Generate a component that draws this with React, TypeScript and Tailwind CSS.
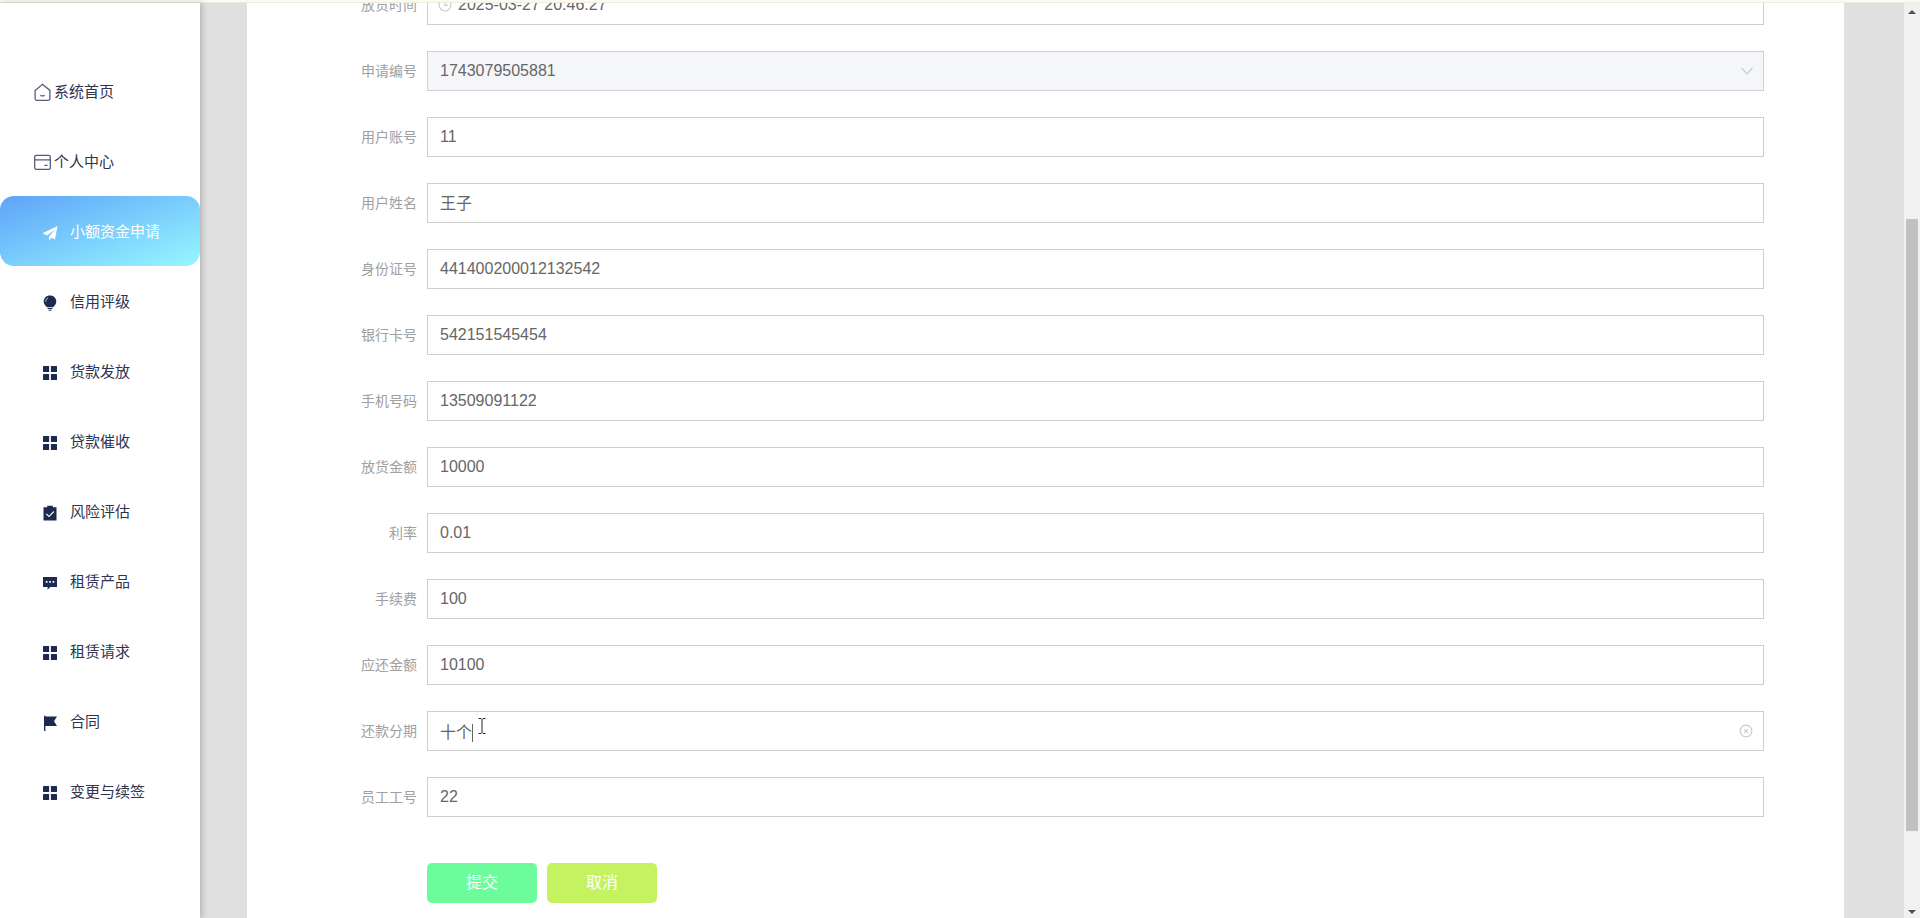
const menu = [
  { name: "小额资金申请", icon: "plane", active: true },
  { name: "信用评级", icon: "bulb" },
  { name: "货款发放", icon: "grid" },
  { name: "贷款催收", icon: "grid" },
  { name: "风险评估", icon: "claim" },
  { name: "租赁产品", icon: "comment" },
  { name: "租赁请求", icon: "grid" },
  { name: "合同", icon: "flag" },
  { name: "变更与续签", icon: "grid" },
]

const fields = [
  { label: "用户账号", value: "11" },
  { label: "用户姓名", value: "王子", cjk: true },
  { label: "身份证号", value: "441400200012132542" },
  { label: "银行卡号", value: "542151545454" },
  { label: "手机号码", value: "13509091122" },
  { label: "放货金额", value: "10000" },
  { label: "利率", value: "0.01" },
  { label: "手续费", value: "100" },
  { label: "应还金额", value: "10100" },
]

function MenuIcon({ name }: { name: string }) {
  const paths: Record<string, React.ReactNode> = {
    plane: <path d="M15.5 1 L0.5 8.3 L5 10.6 L13 4.5 L7 11.4 L7 15.5 L9.6 12.8 L13 14.5 Z" />,
    bulb: (
      <>
        <path d="M8 0.5 C4.2 0.5 1.7 3.2 1.7 6.4 C1.7 8.9 3.4 10.6 5 12.2 L11 12.2 C12.6 10.6 14.3 8.9 14.3 6.4 C14.3 3.2 11.8 0.5 8 0.5 Z" />
        <path d="M5.6 13 H10.4 V14 H5.6 Z M6.6 14.7 H9.4 V15.7 H6.6 Z" />
        <path d="M3.8 6.6 C3.8 4.8 4.8 3.4 6.2 2.8" className="fill-none stroke-white stroke-[0.8]" />
      </>
    ),
    grid: (
      <>
        <rect x="1" y="1" width="6.1" height="6.1" rx="0.5" />
        <rect x="8.9" y="1" width="6.1" height="6.1" rx="0.5" />
        <rect x="1" y="8.9" width="6.1" height="6.1" rx="0.5" />
        <rect x="8.9" y="8.9" width="6.1" height="6.1" rx="0.5" />
      </>
    ),
    claim: (
      <path
        fillRule="evenodd"
        d="M1.5 2.2 H5.2 V0.8 H10.8 V2.2 H14.5 V15.5 H1.5 Z M4.6 8.4 L3.8 9.2 L7 12.3 L12.2 6.9 L11.4 6.1 L7 10.7 Z"
      />
    ),
    comment: (
      <path
        fillRule="evenodd"
        d="M1 2 H15 V12 H8.2 L5.6 14.8 V12 H1 Z M3.8 6 V7.7 H5.5 V6 Z M7.2 6 V7.7 H8.9 V6 Z M10.6 6 V7.7 H12.3 V6 Z"
      />
    ),
    flag: <path d="M2 0.8 H3.4 V1.5 H15 L12 6.2 L15 11 H3.4 V16 H2 Z" />,
  }
  return (
    <svg viewBox="0 0 16 16" className="h-4 w-4 shrink-0 fill-current">
      {paths[name]}
    </svg>
  )
}

function FormRow({ label, disabled, children }: { label: string; disabled?: boolean; children: React.ReactNode }) {
  return (
    <div className="mb-[26px] flex h-10 items-center">
      <label className="w-[170px] shrink-0 pr-[10px] text-right text-[14px] text-[#a0a0a0]">{label}</label>
      <div
        className={
          disabled
            ? "relative flex h-10 flex-1 items-center border border-[#cfcfcf] bg-[#f5f6fa] px-3 text-[16px] text-[#666666]"
            : "relative flex h-10 flex-1 items-center border border-[#cfcfcf] bg-white px-3 text-[16px] text-[#666666]"
        }
      >
        {children}
      </div>
    </div>
  )
}

export default function App() {
  return (
    <div className="flex h-[918px] flex-col overflow-hidden bg-white font-['Liberation_Sans','Noto_Sans_CJK_SC',sans-serif]">
      {/* 顶部细线 */}
      <div className="h-[3px] shrink-0 border-b border-[#ecece0] bg-[#fbfbf3]" />

      <div className="flex min-h-0 flex-1">
        {/* 左侧菜单 */}
        <aside className="z-10 w-[200px] shrink-0 bg-white pt-[53px] shadow-[2px_0_6px_rgba(0,0,0,0.22)]">
          <div className="flex h-[70px] items-center pl-[33px] pt-[3px] text-[15px] text-[#2f3350]">
            <svg viewBox="0 0 18 18" className="mr-[2px] h-[19px] w-[19px] fill-none stroke-[#55587a] stroke-[1.2]">
              <path d="M2 7 L9 1.2 L16 7 V15 Q16 16.4 14.6 16.4 H3.4 Q2 16.4 2 15 Z" />
              <path d="M7 11.5 Q9 13 11 11.5" />
            </svg>
            系统首页
          </div>
          <div className="flex h-[70px] items-center pl-[33px] pt-[3px] text-[15px] text-[#2f3350]">
            <svg viewBox="0 0 18 18" className="mr-[2px] h-[19px] w-[19px] fill-none stroke-[#55587a] stroke-[1.2]">
              <rect x="1.6" y="2.2" width="14.8" height="13.4" rx="1.6" />
              <path d="M1.8 6.6 H16.2 M10.8 11.8 H13.8" />
            </svg>
            个人中心
          </div>
          {menu.map((item) => (
            <div
              key={item.name}
              className={
                item.active
                  ? "flex h-[70px] items-center gap-[12px] rounded-[14px] bg-gradient-to-br from-[#5fa3f7] to-[#97f7ff] pl-[42px] pt-[3px] text-[15px] text-white"
                  : "flex h-[70px] items-center gap-[12px] pl-[42px] pt-[3px] text-[15px] text-[#2f3350]"
              }
            >
              <span className={item.active ? "text-white" : "text-[#1b2a4e]"}>
                <MenuIcon name={item.icon} />
              </span>
              {item.name}
            </div>
          ))}
        </aside>

        {/* 内容区 */}
        <main className="min-w-0 flex-1 bg-[#e0e0e0] pl-[47px] pr-[60px]">
          <div className="h-full overflow-hidden bg-white pl-[10px] pr-[80px]">
            <div className="-mt-[18px]">
              <FormRow label="放货时间">
                <svg viewBox="0 0 16 16" className="-ml-[2px] mr-[6px] h-[14px] w-[14px] fill-none stroke-[#c0c4cc] stroke-[1.2]">
                  <circle cx="8" cy="8" r="6.8" />
                  <path d="M8 4 V8.4 H11" />
                </svg>
                2025-03-27 20:46:27
              </FormRow>
              <FormRow label="申请编号" disabled>
                <span>1743079505881</span>
                <svg viewBox="0 0 12 8" className="absolute right-[10px] h-2 w-3 fill-none stroke-[#c8ccd4] stroke-[1.2]">
                  <path d="M0.6 1 L6 6.8 L11.4 1" />
                </svg>
              </FormRow>
              {fields.map((f) => (
                <FormRow key={f.label} label={f.label}>
                  <span className={f.cjk ? "pt-[2px]" : ""}>{f.value}</span>
                </FormRow>
              ))}
              <FormRow label="还款分期">
                <span className="pt-[3px]">十个</span>
                <span className="mt-[3px] h-[18px] w-px bg-[#666666]" />
                <svg viewBox="0 0 14 14" className="absolute right-[10px] h-[14px] w-[14px] fill-none stroke-[#c8ccd4]">
                  <circle cx="7" cy="7" r="5.8" strokeWidth="1.3" />
                  <path d="M5.2 5.2 L8.8 8.8 M8.8 5.2 L5.2 8.8" strokeWidth="1.1" />
                </svg>
                {/* 鼠标光标 */}
                <svg viewBox="0 0 8 16" className="absolute left-[50px] top-[6px] h-4 w-2 fill-none stroke-[#222222]">
                  <path d="M0.5 0.5 H3 L4 1.5 L5 0.5 H7.5 M4 1.5 V14.5 M0.5 15.5 H3 L4 14.5 L5 15.5 H7.5" strokeWidth="1" />
                </svg>
              </FormRow>
              <FormRow label="员工工号">22</FormRow>
              <div className="mt-[46px] flex gap-[10px] pl-[170px]">
                <button className="h-10 w-[110px] rounded-[5px] bg-[#6cfc9c] text-[16px] text-white">提交</button>
                <button className="h-10 w-[110px] rounded-[5px] bg-[#c5f261] text-[16px] text-white">取消</button>
              </div>
            </div>
          </div>
        </main>

        {/* 滚动条 */}
        <div className="flex w-4 shrink-0 flex-col items-center bg-[#f1f1f1]">
          <div className="mt-[7px] h-0 w-0 border-x-[4px] border-b-[4px] border-x-transparent border-b-[#505050]" />
          <div className="mt-[205px] h-[612px] w-3 bg-[#c1c1c1]" />
          <div className="mt-[79px] h-0 w-0 border-x-[4px] border-t-[4px] border-x-transparent border-t-[#505050]" />
        </div>
      </div>
    </div>
  )
}
